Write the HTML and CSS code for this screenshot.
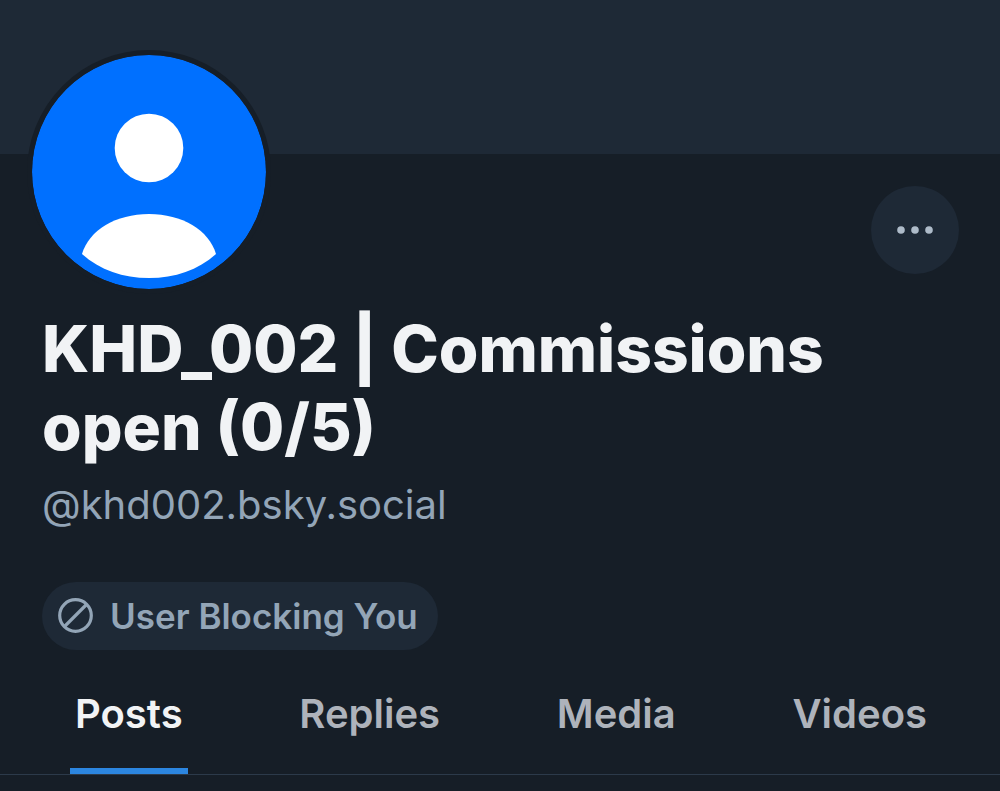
FILE: index.html
```html
<!DOCTYPE html>
<html lang="en">
<head>
  <meta charset="utf-8">
  <title>KHD_002 | Commissions open (0/5)</title>
  <link rel="stylesheet" href="styles.css">
</head>
<body>
  <header class="banner"></header>

  <main class="profile">
    <div class="profile-top">
      <svg class="avatar" viewBox="0 0 234 234" role="img" aria-label="Avatar">
        <circle cx="117" cy="117" r="117" fill="#0070ff"/>
        <circle cx="117" cy="93" r="34.300" fill="#fff"/>
        <path d="M50 199C57 175 84 159 117 159s60 16 67 40c-18 16-41 24-67 24s-49-8-67-24z" fill="#fff"/>
      </svg>
      <button class="more-button" type="button" aria-label="More options">
        <svg width="36" height="8" viewBox="0 0 36 8" fill="#aebbc9">
          <circle cx="4" cy="4" r="3.800"/>
          <circle cx="18" cy="4" r="3.800"/>
          <circle cx="32" cy="4" r="3.800"/>
        </svg>
      </button>
    </div>

    <h1 class="name">KHD_002 | Commissions open (0/5)</h1>
    <p class="handle">@khd002.bsky.social</p>

    <button class="label" type="button">
      <svg width="36" height="36" viewBox="0 0 36 36" fill="none" stroke="#93a5b7" stroke-width="3.200">
        <circle cx="17.500" cy="17.500" r="15.800"/>
        <path d="M6.500 28.500L28.500 6.500"/>
      </svg>
      User Blocking You
    </button>
  </main>

  <nav class="tabs">
    <a class="tab active" href="#posts">Posts</a>
    <a class="tab" href="#replies">Replies</a>
    <a class="tab" href="#media">Media</a>
    <a class="tab" href="#videos">Videos</a>
  </nav>
</body>
</html>
```

FILE: styles.css
```css
body {
  margin: 0;
  background-color: #161e27;
  color: #f1f3f5;
  font-family: Inter, sans-serif;
}

.banner {
  height: 154px;
  background-color: #1e2936;
}

.profile {
  padding: 0 41px 0 42px;
}

.profile-top {
  display: flex;
  justify-content: space-between;
  align-items: flex-start;
}

.avatar {
  width: 234px;
  height: 234px;
  margin: -104px 0 0 -15px;
  border: 5px solid #161e27;
  border-radius: 50%;
}

.more-button {
  display: flex;
  align-items: center;
  justify-content: center;
  width: 88px;
  height: 88px;
  margin-top: 32px;
  padding: 0;
  background-color: #1e2936;
  border: none;
  border-radius: 50%;
  cursor: pointer;
}

.name {
  margin: 16px 0 0;
  font-size: 64px;
  font-weight: 800;
  line-height: 78px;
}

.handle {
  margin: 13px 0 0;
  color: #93a5b7;
  font-size: 40px;
  line-height: 52px;
}

.label {
  display: inline-flex;
  align-items: center;
  gap: 16px;
  height: 68px;
  margin-top: 51px;
  padding: 0 20px 0 16px;
  background-color: #1e2936;
  color: #93a5b7;
  border: none;
  border-radius: 34px;
  font-family: inherit;
  font-size: 35px;
  font-weight: 600;
  cursor: pointer;
}

.tabs {
  display: flex;
  justify-content: space-between;
  margin-top: 24px;
  padding: 0 68px 0 70px;
  border-bottom: 1px solid #2c3a4a;
}

.tab {
  padding: 16px 5px 30px;
  border-bottom: 6px solid transparent;
  color: #aeb3bb;
  font-size: 40px;
  font-weight: 600;
  line-height: 48px;
  text-decoration: none;
}

.tab.active {
  border-bottom-color: #2c86e0;
  color: #f1f3f5;
}
```
